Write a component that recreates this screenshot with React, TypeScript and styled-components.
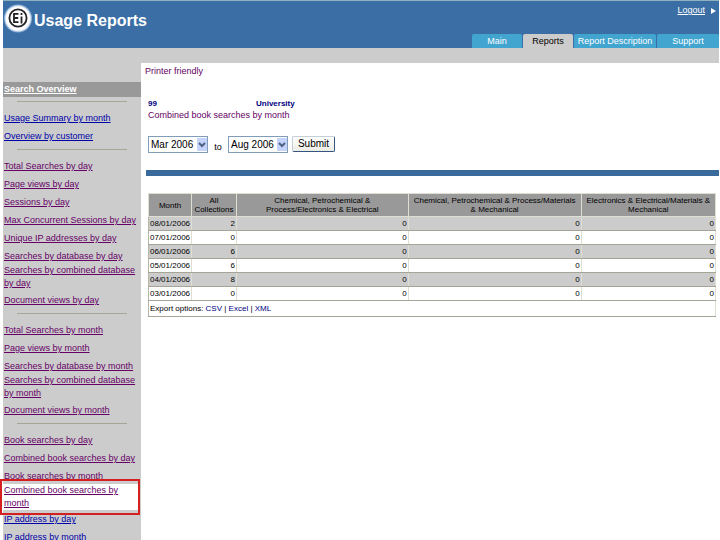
import React from 'react';
import styled, { createGlobalStyle } from 'styled-components';

const GlobalStyle = createGlobalStyle`
  * { box-sizing: border-box; }
  html { scrollbar-width: none; }
  body {
    margin: 0;
    background: #fff;
    font-family: "Liberation Sans", Arial, sans-serif;
    font-size: 9px;
    line-height: 13px;
    color: #000;
  }
`;

const Page = styled.div`
  min-height: 100vh;
  display: flex;
  flex-direction: column;
  padding: 0 1px 0 3px;
`;

const Header = styled.header`
  height: 48px;
  display: flex;
  justify-content: space-between;
  background: #3a6ea5;
  border-top: 1px solid #8fb0bd;
`;

const Brand = styled.div`
  display: flex;
  align-items: flex-start;
  gap: 2px;
  padding: 3px 0 0 1px;
`;

const Title = styled.h1`
  margin: 0;
  padding-top: 5px;
  font-size: 16px;
  line-height: 24px;
  font-weight: bold;
  color: #fff;
`;

const HeaderSide = styled.div`
  display: flex;
  flex-direction: column;
  justify-content: space-between;
  align-items: flex-end;
`;

const Logout = styled.a`
  display: flex;
  align-items: center;
  gap: 6px;
  padding: 3px 3px 0 0;
  color: #fff;
`;

const Tabs = styled.nav`
  display: flex;
  gap: 1px;
`;

const Tab = styled.a<{ $active?: boolean; $width: number }>`
  width: ${(p) => p.$width}px;
  height: 14px;
  line-height: 14px;
  text-align: center;
  white-space: nowrap;
  text-decoration: none;
  border-radius: 2px 2px 0 0;
  color: ${(p) => (p.$active ? '#000' : '#fff')};
  background: ${(p) => (p.$active ? '#ccc' : '#42a5cf')};
`;

const Body = styled.div`
  flex: 1;
  display: flex;
  background: #ccc;
`;

const Sidebar = styled.nav`
  width: 138px;
  flex: none;
  padding-top: 34px;
`;

const SidebarTitle = styled.a`
  display: block;
  height: 15px;
  padding: 0 1px;
  line-height: 15px;
  font-weight: bold;
  color: #fff;
  background: #999;
`;

const Divider = styled.hr`
  height: 1px;
  margin: 4px 14px 7px;
  border: 0;
  background: #a9a595;
`;

const List = styled.ul`
  margin: 0;
  padding: 0;
  list-style: none;
`;

const Item = styled.li<{ $tall?: boolean; $marked?: boolean }>`
  position: relative;
  padding: ${(p) => (p.$tall ? '0 1px' : '3px 1px 2px')};
  margin: ${(p) => (p.$tall ? '-1px 0 1px' : '0')};
  ${(p) =>
    p.$marked &&
    `
    background: #fff;
    margin: -1px 2px 0 0;
    &::after {
      content: '';
      position: absolute;
      inset: -5px -1px -5px -3px;
      border: 2px solid #d42020;
      pointer-events: none;
    }
  `}
`;

const ItemLink = styled.a<{ $fresh?: boolean }>`
  color: ${(p) => (p.$fresh ? '#0000a8' : '#660066')};
`;

const Main = styled.main`
  flex: 1;
  margin-top: 15px;
  padding: 2px 0 0 4px;
  background: #fff;
`;

const PrinterLink = styled.a`
  display: block;
  text-decoration: none;
  color: #660066;
`;

const Account = styled.div`
  display: flex;
  margin-top: 20px;
  padding-left: 3px;
  line-height: 12px;
  font-size: 8px;
  font-weight: bold;
  color: #000080;
`;

const AccountId = styled.span`
  width: 108px;
`;

const ReportName = styled.h2`
  margin: 0;
  padding-left: 3px;
  font-size: 9px;
  line-height: 11px;
  font-weight: normal;
  color: #660066;
`;

const Form = styled.form`
  display: flex;
  align-items: flex-start;
  margin-top: 15px;
  padding-left: 3px;
`;

const SelectBox = styled.span`
  position: relative;
  display: flex;
  width: 60px;
`;

const Select = styled.select`
  appearance: none;
  width: 100%;
  height: 17px;
  padding: 0 0 0 2px;
  border: 1px solid #7f9db9;
  border-radius: 0;
  background: #fff;
  font-family: inherit;
  font-size: 10px;
  color: #000;
`;

const Arrow = styled.svg`
  position: absolute;
  top: 2px;
  right: 1px;
  pointer-events: none;
`;

const To = styled.span`
  width: 20px;
  padding-top: 5px;
  text-align: center;
`;

const Submit = styled.button`
  width: 43px;
  height: 16px;
  margin-left: 4px;
  padding: 0;
  border: 1px solid #33557f;
  border-top-color: #c5cfd8;
  border-left-color: #c5cfd8;
  border-radius: 2px;
  background: linear-gradient(#fff, #ecebe4);
  font-family: inherit;
  font-size: 10px;
  line-height: 12px;
  color: #000;
`;

const Rule = styled.div`
  height: 6px;
  margin: 16px 0 17px 1px;
  background: #3a6a9c;
`;

const Table = styled.table`
  width: calc(100% - 6px);
  margin-left: 3px;
  table-layout: fixed;
  border-collapse: collapse;
  border: 1px solid #deded2;
  font-size: 8px;
  line-height: 9px;
`;

const Col = styled.col<{ $share: string }>`
  width: ${(p) => p.$share};
`;

const Th = styled.th`
  height: 23px;
  padding: 2px;
  font-weight: normal;
  background: #999;
  border: 1px solid #deded2;
`;

const Row = styled.tr<{ $shaded?: boolean }>`
  height: 14px;
  background: ${(p) => (p.$shaded ? '#ccc' : '#fff')};
`;

const FooterRow = styled(Row)`
  height: 16px;
`;

const Td = styled.td<{ $left?: boolean }>`
  padding: 2px 1px;
  text-align: ${(p) => (p.$left ? 'left' : 'right')};
  border: 1px solid #deded2;
  border-bottom-color: #a5a597;
  border-left-color: #b5b5a8;
`;

const ExportLink = styled.a`
  color: #000080;
  text-decoration: none;
`;

const Logo = () => (
  <svg width="28" height="30" viewBox="0 0 28 30" role="img" aria-label="Ei">
    <circle cx="14" cy="14.500" r="14" fill="#8fb0d6" />
    <circle cx="14" cy="14.500" r="13" fill="#dbe8f5" />
    <circle cx="14" cy="14.500" r="12" fill="#fff" />
    <circle cx="14" cy="14" r="8.600" fill="none" stroke="#222" strokeWidth="1.800" />
    <path d="M14.500 9.800H10v8.400h4.500M10 14h4.200M17.500 12.500v7M17.500 9v2" fill="none" stroke="#222" strokeWidth="1.800" />
  </svg>
);

type Entry = { label: string; tall?: boolean; fresh?: boolean; marked?: boolean };

const groups: Entry[][] = [
  [
    { label: 'Usage Summary by month', fresh: true },
    { label: 'Overview by customer', fresh: true },
  ],
  [
    { label: 'Total Searches by day' },
    { label: 'Page views by day' },
    { label: 'Sessions by day' },
    { label: 'Max Concurrent Sessions by day' },
    { label: 'Unique IP addresses by day' },
    { label: 'Searches by database by day' },
    { label: 'Searches by combined database by day', tall: true },
    { label: 'Document views by day' },
  ],
  [
    { label: 'Total Searches by month' },
    { label: 'Page views by month' },
    { label: 'Searches by database by month' },
    { label: 'Searches by combined database by month', tall: true },
    { label: 'Document views by month' },
  ],
  [
    { label: 'Book searches by day' },
    { label: 'Combined book searches by day' },
    { label: 'Book searches by month' },
    { label: 'Combined book searches by month', tall: true, marked: true },
    { label: 'IP address by day', fresh: true },
    { label: 'IP address by month', fresh: true },
  ],
];

const headings = [
  'Month',
  'All Collections',
  'Chemical, Petrochemical & Process/Electronics & Electrical',
  'Chemical, Petrochemical & Process/Materials & Mechanical',
  'Electronics & Electrical/Materials & Mechanical',
];

const shares = ['7.6%', '7.9%', '30.3%', '30.5%', '23.7%'];

const rows = [
  ['08/01/2006', '2', '0', '0', '0'],
  ['07/01/2006', '0', '0', '0', '0'],
  ['06/01/2006', '6', '0', '0', '0'],
  ['05/01/2006', '6', '0', '0', '0'],
  ['04/01/2006', '8', '0', '0', '0'],
  ['03/01/2006', '0', '0', '0', '0'],
];

const MonthSelect = ({ label, value }: { label: string; value: string }) => (
  <SelectBox>
    <Select aria-label={label} defaultValue={value}>
      <option>Mar 2006</option>
      <option>Aug 2006</option>
    </Select>
    <Arrow width="10" height="13" viewBox="0 0 10 13">
      <rect width="10" height="13" rx="1" fill="#c3d3fb" />
      <path d="M2 5l3 3 3-3" fill="none" stroke="#4d6185" strokeWidth="2" />
    </Arrow>
  </SelectBox>
);

export default function App() {
  return (
    <Page>
      <GlobalStyle />
      <Header>
        <Brand>
          <Logo />
          <Title>Usage Reports</Title>
        </Brand>
        <HeaderSide>
          <Logout href="#logout">
            Logout
            <svg width="5" height="6" viewBox="0 0 5 6" aria-hidden="true">
              <path d="M0 0l5 3-5 3z" fill="#fff" />
            </svg>
          </Logout>
          <Tabs>
            <Tab href="#main" $width={50}>Main</Tab>
            <Tab href="#reports" $width={50} $active>Reports</Tab>
            <Tab href="#description" $width={82}>Report Description</Tab>
            <Tab href="#support" $width={62}>Support</Tab>
          </Tabs>
        </HeaderSide>
      </Header>
      <Body>
        <Sidebar>
          <SidebarTitle href="#overview">Search Overview</SidebarTitle>
          {groups.map((group, i) => (
            <React.Fragment key={i}>
              <Divider />
              <List>
                {group.map((e) => (
                  <Item key={e.label} $tall={e.tall} $marked={e.marked}>
                    <ItemLink href="#report" $fresh={e.fresh}>{e.label}</ItemLink>
                  </Item>
                ))}
              </List>
            </React.Fragment>
          ))}
        </Sidebar>
        <Main>
          <PrinterLink href="#print">Printer friendly</PrinterLink>
          <Account>
            <AccountId>99</AccountId>
            <span>University</span>
          </Account>
          <ReportName>Combined book searches by month</ReportName>
          <Form onSubmit={(e) => e.preventDefault()}>
            <MonthSelect label="From month" value="Mar 2006" />
            <To>to</To>
            <MonthSelect label="To month" value="Aug 2006" />
            <Submit type="submit">Submit</Submit>
          </Form>
          <Rule />
          <Table>
            <colgroup>
              {shares.map((s, i) => (
                <Col key={i} $share={s} />
              ))}
            </colgroup>
            <thead>
              <tr>
                {headings.map((h) => (
                  <Th key={h} scope="col">{h}</Th>
                ))}
              </tr>
            </thead>
            <tbody>
              {rows.map((r, i) => (
                <Row key={r[0]} $shaded={i % 2 === 0}>
                  {r.map((c, j) => (
                    <Td key={j} $left={j === 0}>{c}</Td>
                  ))}
                </Row>
              ))}
              <FooterRow>
                <Td colSpan={5} $left>
                  Export options: <ExportLink href="#csv">CSV</ExportLink> |{' '}
                  <ExportLink href="#excel">Excel</ExportLink> |{' '}
                  <ExportLink href="#xml">XML</ExportLink>
                </Td>
              </FooterRow>
            </tbody>
          </Table>
        </Main>
      </Body>
    </Page>
  );
}
